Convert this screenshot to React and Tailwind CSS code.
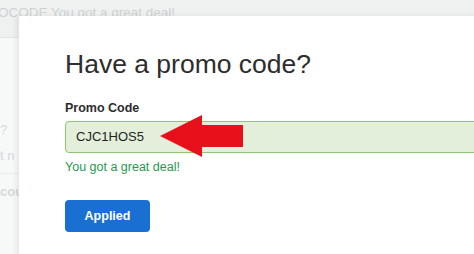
export default function App() {
  return (
    <div className="relative w-[474px] h-[254px] overflow-hidden bg-[#f7f8f8] font-['Liberation_Sans',Arial,sans-serif]">
      {/* page behind the dialog */}
      <div className="h-[38px] bg-[#eff1f1] border-b border-[#e3e5e5] overflow-hidden">
        <div className="ml-[-2px] pt-[5px] text-[13.5px] leading-[16px] text-[#cdd1d1] whitespace-nowrap">
          OCODE You got a great deal!
        </div>
      </div>
      <div className="flex flex-col w-[19px] overflow-hidden text-[13px] leading-[16px] text-[#d6d8d8] whitespace-nowrap">
        <div className="h-[100px] flex items-end">?</div>
        <div className="h-[36px] flex items-center border-b border-[#eceeee]">t n</div>
        <div className="h-[36px] flex items-center font-bold">cou</div>
      </div>

      {/* dialog */}
      <div className="absolute left-[19px] top-[16px] w-[480px] h-[260px] bg-white shadow-[-3px_0_5px_rgba(0,0,0,0.07)]">
        <div className="pl-[46px] pt-[32px]">
          <h1 className="text-[26.5px] leading-[32px] text-[#2d2d2d]">Have a promo code?</h1>
          <label className="block mt-[20px] text-[12.5px] leading-[16px] font-bold text-[#2d2d2d]">Promo Code</label>
          <div className="relative mt-[5px] h-[32px] w-[460px] rounded-[4px] border border-[#8fc470] bg-[#e4efdb] flex items-center pl-[10px] text-[13px] text-[#1f1f1f]">
            CJC1HOS5
            <svg className="absolute left-[94px] top-[-7px]" width="84" height="43" viewBox="0 0 84 43">
              <polygon points="0,21 42,0 42,10 83,10 83,32 42,32 42,42" fill="#e8111b" />
            </svg>
          </div>
          <p className="mt-[6px] text-[12.5px] leading-[16px] text-[#1f9a4e]">You got a great deal!</p>
          <button className="mt-[25px] w-[85px] h-[32px] rounded-[4px] bg-[#1a70d2] text-white text-[12.5px] font-bold">
            Applied
          </button>
        </div>
      </div>
    </div>
  );
}
